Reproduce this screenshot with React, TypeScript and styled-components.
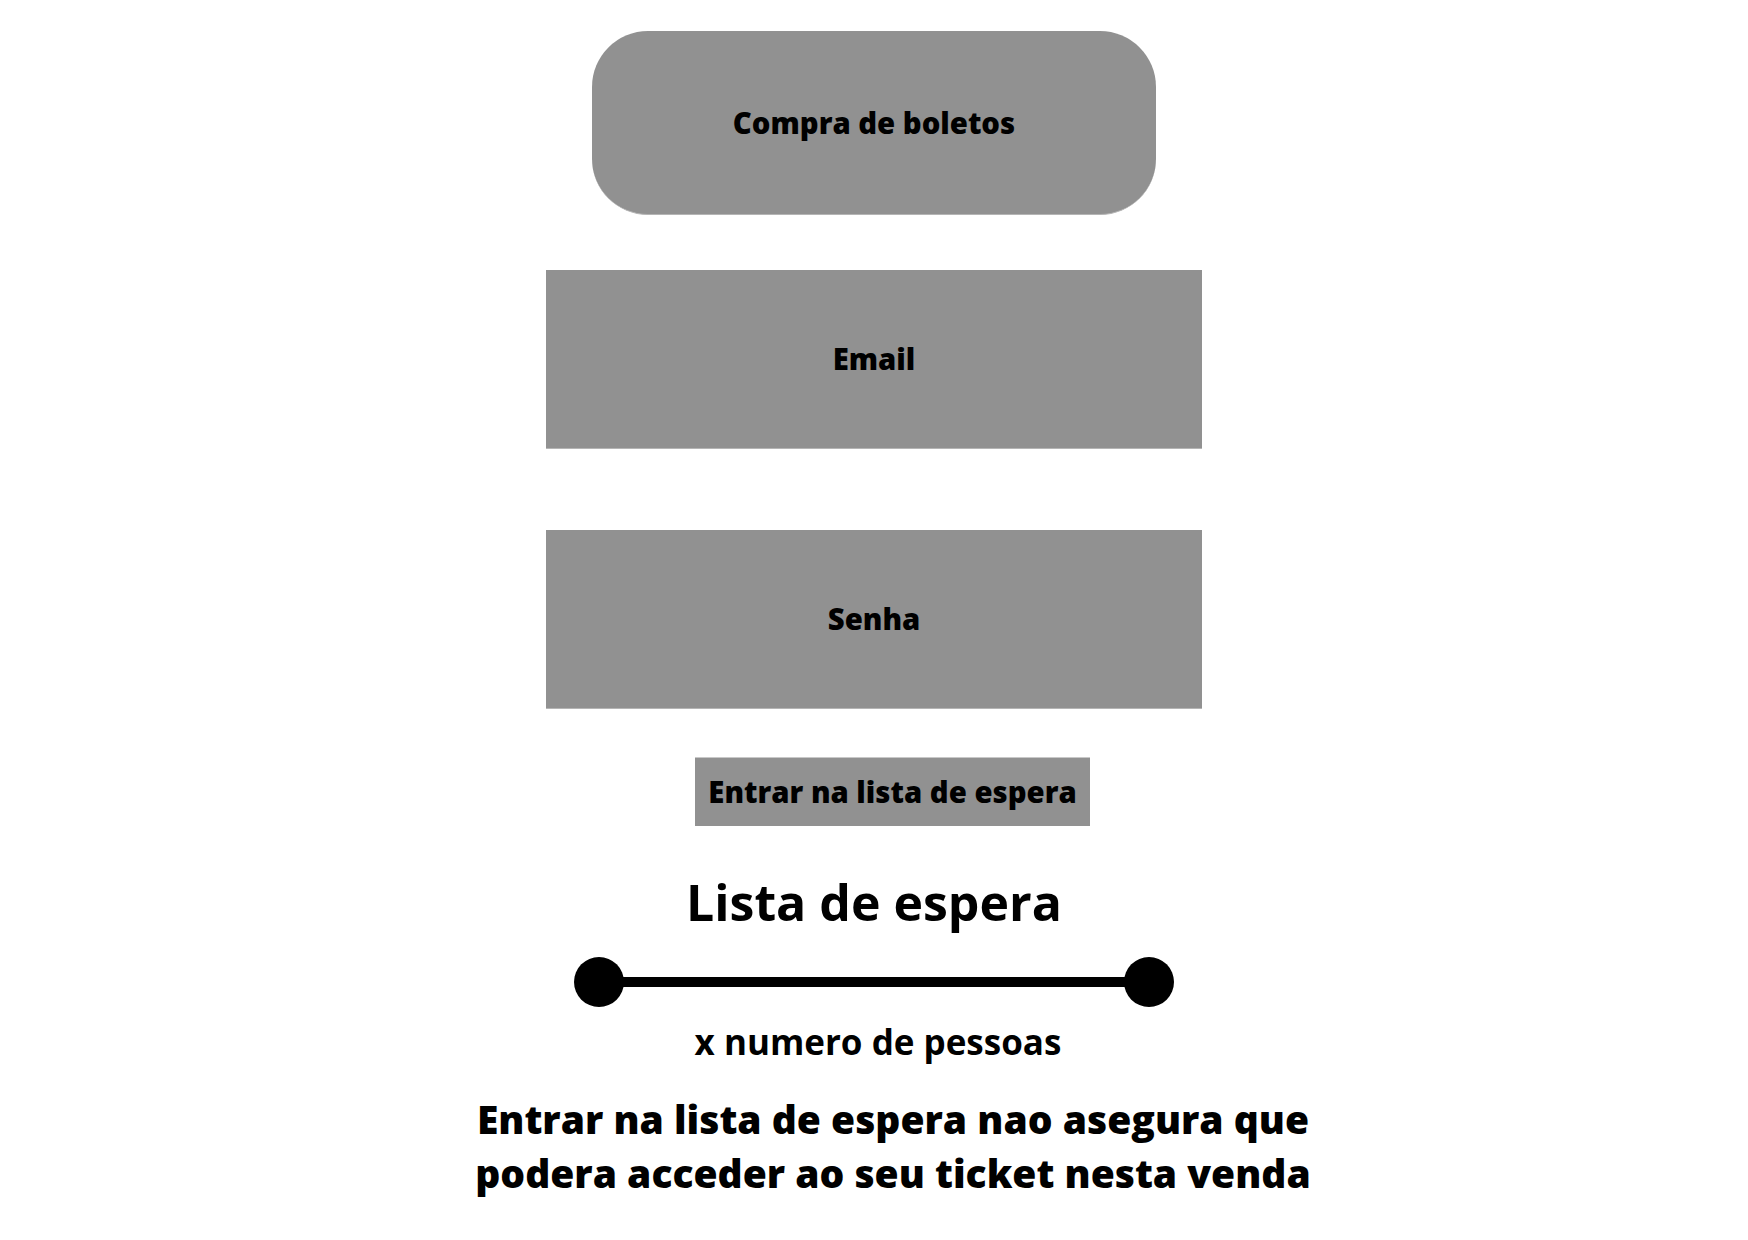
import React from 'react';
import styled, { createGlobalStyle } from 'styled-components';

const GlobalStyle = createGlobalStyle`
  html, body {
    margin: 0;
    padding: 0;
    background: #ffffff;
  }
  body {
    font-family: 'Open Sans', 'Noto Sans', 'DejaVu Sans', sans-serif;
    color: #000;
  }
`;

const Page = styled.div`
  width: 1748px;
  height: 1240px;
  display: flex;
  flex-direction: column;
  align-items: center;
  padding-top: 31px;
  box-sizing: border-box;
`;

const GrayBlock = styled.div<{ w: number; h: number; radius?: number; mt?: number }>`
  width: ${p => p.w}px;
  height: ${p => p.h}px;
  margin-top: ${p => p.mt ?? 0}px;
  border-radius: ${p => p.radius ?? 0}px;
  background: #919191;
  display: flex;
  align-items: center;
  justify-content: center;
  box-sizing: border-box;
  border-bottom: 1px solid #b5b5b5;
`;

const Label = styled.span`
  font-size: 29.3px;
  font-weight: 800;
`;

const WaitButton = styled.div`
  margin-top: 48px;
  margin-left: 37px;
  width: 395px;
  height: 69px;
  background: #919191;
  display: flex;
  align-items: center;
  justify-content: center;
  font-size: 29.3px;
  font-weight: 800;
  border-top: 1px solid #c8c8c8;
  box-sizing: border-box;
`;

const Heading = styled.h1`
  margin: 44px 0 0;
  font-size: 50px;
  font-weight: 700;
  line-height: 64px;
`;

const Slider = styled.svg`
  margin-top: 22px;
  display: block;
`;

const Count = styled.div`
  margin: 12px 0 0 8px;
  font-size: 35px;
  font-weight: 700;
  line-height: 44px;
`;

const Note = styled.p`
  margin: 28px 0 0 38px;
  font-size: 39px;
  font-weight: 800;
  line-height: 54px;
  text-align: center;
`;

export default function App() {
  return (
    <>
      <GlobalStyle />
      <Page>
        <GrayBlock w={564} h={184} radius={56}>
          <Label>Compra de boletos</Label>
        </GrayBlock>
        <GrayBlock w={656} h={179} mt={55}>
          <Label>Email</Label>
        </GrayBlock>
        <GrayBlock w={656} h={179} mt={81}>
          <Label>Senha</Label>
        </GrayBlock>
        <WaitButton>Entrar na lista de espera</WaitButton>
        <Heading>Lista de espera</Heading>
        <Slider width="600" height="52" viewBox="0 0 600 52">
          <line x1="25" y1="26" x2="575" y2="26" stroke="#000" strokeWidth="10" />
          <circle cx="25" cy="26" r="25" fill="#000" />
          <circle cx="575" cy="26" r="25" fill="#000" />
        </Slider>
        <Count>x numero de pessoas</Count>
        <Note>
          Entrar na lista de espera nao asegura que
          <br />
          podera acceder ao seu ticket nesta venda
        </Note>
      </Page>
    </>
  );
}
